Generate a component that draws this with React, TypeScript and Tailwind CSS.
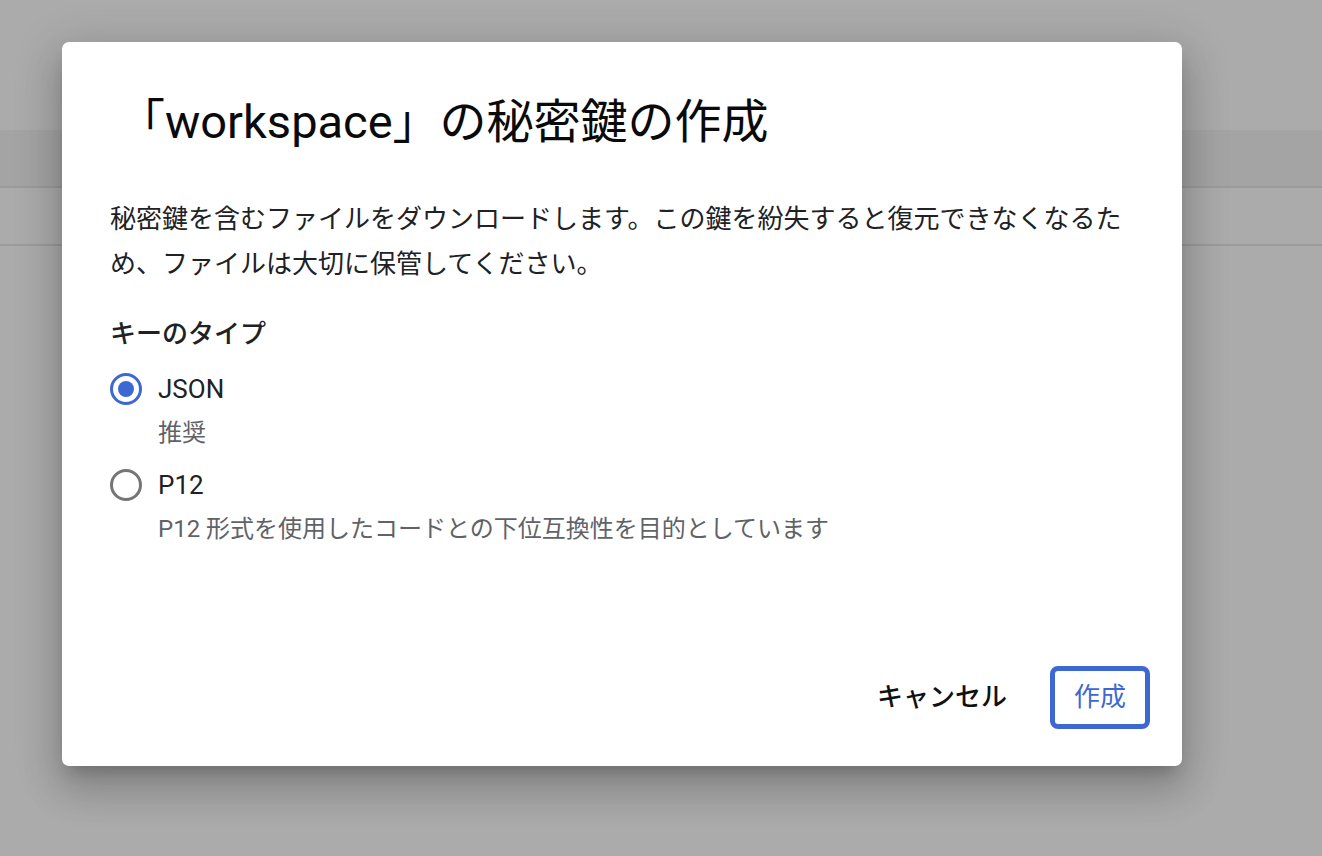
import { useState } from "react";

const font = "font-['Roboto','Noto_Sans_CJK_JP',sans-serif]";

const keyTypes = [
  { id: "json", label: "JSON", hint: "推奨" },
  { id: "p12", label: "P12", hint: "P12 形式を使用したコードとの下位互換性を目的としています" },
];

function Radio({ checked }: { checked: boolean }) {
  return (
    <span
      className={`flex h-8 w-8 shrink-0 items-center justify-center rounded-full border-[3px] ${
        checked ? "border-[#3d67d2]" : "border-[#757575]"
      }`}
    >
      {checked && <span className="h-4 w-4 rounded-full bg-[#3d67d2]" />}
    </span>
  );
}

export default function App() {
  const [keyType, setKeyType] = useState("json");

  return (
    <div className={`relative h-[856px] w-[1322px] overflow-hidden bg-[#ababab] ${font}`}>
      {/* page behind the scrim */}
      <div className="h-[130px]" />
      <div className="h-[56px] bg-[#a4a4a4]" />
      <div className="h-[2px] bg-[#9b9b9b]" />
      <div className="h-[56px]" />
      <div className="h-[2px] bg-[#9b9b9b]" />

      {/* Dialog */}
      <div className="absolute left-[62px] top-[42px] flex h-[724px] w-[1120px] flex-col rounded-[7px] bg-white pl-[48px] pr-[32px] shadow-[0_11px_15px_-7px_rgba(0,0,0,0.2),0_24px_38px_3px_rgba(0,0,0,0.14),0_9px_46px_8px_rgba(0,0,0,0.12)]">
        <h2 className="mt-[52px] pl-[8px] text-[47px] leading-[56px] font-normal text-[#0a0a0a]">
          「workspace」の秘密鍵の作成
        </h2>

        <p className="mt-[47px] pr-[16px] text-[26px] leading-[45px] text-[#202124]">
          秘密鍵を含むファイルをダウンロードします。この鍵を紛失すると復元できなくなるため、ファイルは大切に保管してください。
        </p>

        <div className="mt-[25px] text-[26px] leading-[45px] font-medium text-[#202124]">キーのタイプ</div>

        <div className="mt-[12px] flex flex-col gap-[14px]">
          {keyTypes.map((k) => (
            <label key={k.id} className="flex cursor-pointer flex-col" onClick={() => setKeyType(k.id)}>
              <span className="flex h-[40px] items-center gap-[16px]">
                <Radio checked={keyType === k.id} />
                <span className="text-[26px] text-[#202124]">{k.label}</span>
              </span>
              <span className="mt-[6px] pl-[48px] text-[24px] leading-[36px] text-[#5f6368]">{k.hint}</span>
            </label>
          ))}
        </div>

        <div className="mt-auto mb-[37px] flex items-center justify-end gap-[43px]">
          <button className="text-[26px] font-medium text-[#111]">キャンセル</button>
          <button className="flex h-[63px] w-[100px] items-center justify-center rounded-[8px] border-[5px] border-[#3d67d2] text-[26px] text-[#3d67d2]">
            作成
          </button>
        </div>
      </div>
    </div>
  );
}
